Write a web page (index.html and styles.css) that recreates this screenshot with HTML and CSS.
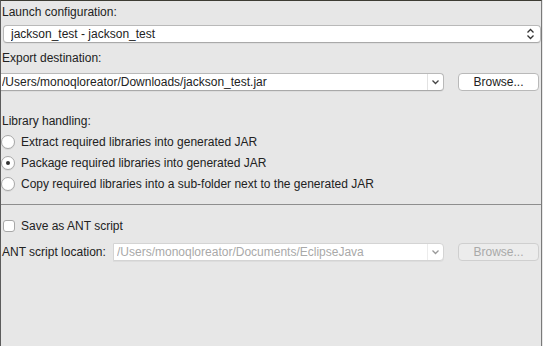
FILE: index.html
```html
<!DOCTYPE html>
<html lang="en">
<head>
  <meta charset="utf-8" />
  <title>Runnable JAR File Export</title>
  <link rel="stylesheet" href="styles.css">
</head>
<body>
  <div class="frame">
    <p class="label first">Launch configuration:</p>
    <div class="combo launch">
      <span class="combo-text">jackson_test - jackson_test</span>
      <svg class="updown" width="9" height="12" viewBox="0 0 9 12">
        <path d="M1.5 4.5 L4.5 1.5 L7.5 4.5 M1.5 7.5 L4.5 10.5 L7.5 7.5" fill="none" stroke="#333" stroke-width="1.3"/>
      </svg>
    </div>

    <p class="label">Export destination:</p>
    <div class="path-row">
      <div class="combo path">
        <span class="combo-text">/Users/monoqloreator/Downloads/jackson_test.jar</span>
        <span class="drop">
          <svg width="9" height="6" viewBox="0 0 9 6"><path d="M1.5 1.5 L4.5 4.5 L7.5 1.5" fill="none" stroke="#444" stroke-width="1.3"/></svg>
        </span>
      </div>
      <button type="button" class="browse">Browse...</button>
    </div>

    <p class="label library">Library handling:</p>
    <div class="radio-list">
      <label class="radio-row"><span class="radio"></span>Extract required libraries into generated JAR</label>
      <label class="radio-row"><span class="radio checked"></span>Package required libraries into generated JAR</label>
      <label class="radio-row"><span class="radio"></span>Copy required libraries into a sub-folder next to the generated JAR</label>
    </div>

    <hr class="separator">

    <label class="check-row"><span class="checkbox"></span>Save as ANT script</label>

    <div class="path-row ant">
      <span class="ant-label">ANT script location:</span>
      <div class="combo path disabled">
        <span class="combo-text">/Users/monoqloreator/Documents/EclipseJava</span>
        <span class="drop">
          <svg width="9" height="6" viewBox="0 0 9 6"><path d="M1.5 1.5 L4.5 4.5 L7.5 1.5" fill="none" stroke="#999" stroke-width="1.3"/></svg>
        </span>
      </div>
      <button type="button" class="browse disabled">Browse...</button>
    </div>
  </div>
</body>
</html>
```

FILE: styles.css
```css
body {
  margin: 0;
  background-color: #e7e7e7;
  font-family: "Liberation Sans", Arial, sans-serif;
  font-size: 12px;
  color: #222;
}
.frame {
  box-sizing: border-box;
  width: 542px;
  height: 346px;
  border-top: 1px solid #3d3c34;
  border-left: 1px solid #5c5c5c;
  border-right: 1px solid #7a7a7a;
  padding-top: 3px;
}
.label {
  margin: 0;
  padding-left: 1px;
  line-height: 16px;
}
.label.first {
  margin-bottom: 5px;
}
.combo {
  box-sizing: border-box;
  display: flex;
  align-items: center;
  background-color: #fff;
  border: 1px solid #b9b9b9;
  border-bottom-color: #a9a9a9;
  border-radius: 4px;
  box-shadow: 0 1px 0 rgba(0, 0, 0, 0.04);
}
.combo.launch {
  margin: 0 0 7px 2px;
  width: 538px;
  height: 18px;
  padding: 0 5px 0 7px;
}
.combo-text {
  flex: 1;
  white-space: nowrap;
  overflow: hidden;
}
.updown {
  display: block;
}
.path-row {
  display: flex;
  align-items: center;
  margin-top: 7px;
}
.combo.path {
  width: 443px;
  height: 18px;
  padding-left: 1px;
  border-radius: 0 4px 4px 0;
  border-left: none;
}
.drop {
  box-sizing: border-box;
  width: 16px;
  height: 100%;
  border-left: 1px solid #e2e2e2;
  display: flex;
  align-items: center;
  justify-content: center;
}
.drop svg {
  display: block;
}
.browse {
  box-sizing: border-box;
  margin-left: 14px;
  width: 81px;
  height: 18px;
  padding: 0;
  background-color: #fff;
  border: 1px solid #b9b9b9;
  border-radius: 4px;
  font-family: inherit;
  font-size: 12px;
  color: #222;
}
.label.library {
  margin-top: 22px;
}
.radio-list {
  margin-top: 2px;
}
.radio-row {
  display: flex;
  align-items: center;
  height: 21px;
}
.radio {
  box-sizing: border-box;
  width: 14px;
  height: 14px;
  margin-right: 6px;
  border: 1px solid #a8a8a8;
  border-radius: 50%;
  background-color: #fff;
  box-shadow: 0 1px 0 rgba(0, 0, 0, 0.06);
  display: flex;
  align-items: center;
  justify-content: center;
}
.radio.checked::after {
  content: "";
  width: 4px;
  height: 4px;
  border-radius: 50%;
  background-color: #333;
}
.separator {
  margin: 10px 0 0;
  border: none;
  border-top: 1px solid #8e8e8e;
  height: 0;
}
.check-row {
  display: flex;
  align-items: center;
  height: 16px;
  margin-top: 13px;
}
.checkbox {
  box-sizing: border-box;
  width: 12px;
  height: 12px;
  margin: 0 6px 0 2px;
  border: 1px solid #a8a8a8;
  border-radius: 3px;
  background-color: #fff;
}
.path-row.ant {
  margin-top: 9px;
}
.ant-label {
  width: 111px;
  padding-left: 1px;
}
.combo.path.disabled {
  width: 331px;
  border-left: 1px solid #d4d4d4;
  border-color: #d4d4d4;
  border-radius: 0 4px 4px 0;
  color: #a9a9a9;
  padding-left: 3px;
}
.disabled .drop {
  border-left-color: #ececec;
}
.browse.disabled {
  background-color: #ececec;
  border-color: #cfcfcf;
  color: #a9a9a9;
}
```
